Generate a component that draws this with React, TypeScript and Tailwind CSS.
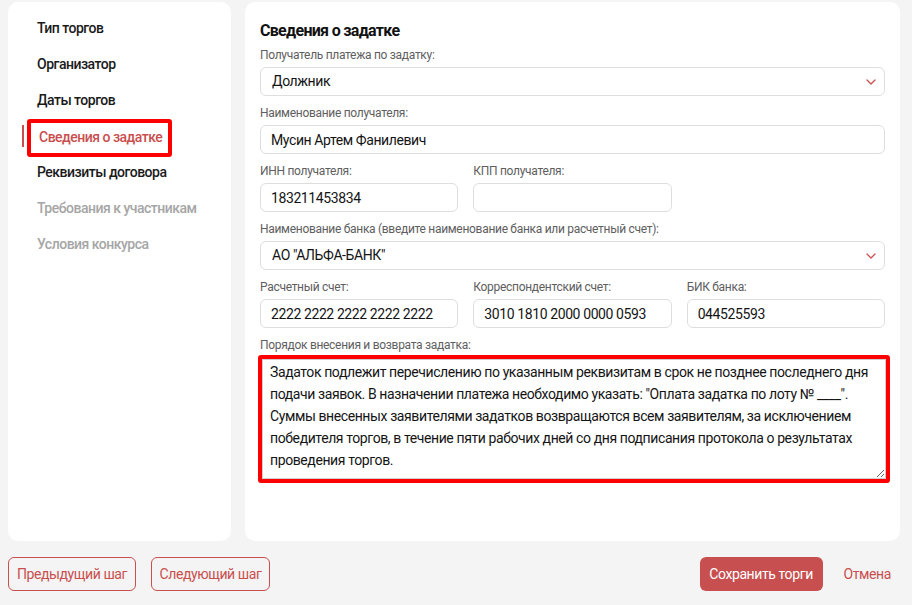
import React from 'react';

const red = '#c94f4f';

const steps = [
  { label: 'Тип торгов', state: 'done' },
  { label: 'Организатор', state: 'done' },
  { label: 'Даты торгов', state: 'done' },
  { label: 'Сведения о задатке', state: 'active' },
  { label: 'Реквизиты договора', state: 'done' },
  { label: 'Требования к участникам', state: 'disabled' },
  { label: 'Условия конкурса', state: 'disabled' },
];

const depositText =
  'Задаток подлежит перечислению по указанным реквизитам в срок не позднее последнего дня\n' +
  'подачи заявок. В назначении платежа необходимо указать: "Оплата задатка по лоту № ____".\n' +
  'Суммы внесенных заявителями задатков возвращаются всем заявителям, за исключением\n' +
  'победителя торгов, в течение пяти рабочих дней со дня подписания протокола о результатах\n' +
  'проведения торгов.';

const Chevron = () => (
  <svg width="10" height="6" viewBox="0 0 10 6" fill="none" className="shrink-0">
    <path d="M1 1l4 4 4-4" stroke={red} strokeWidth="1.3" strokeLinecap="round" strokeLinejoin="round" />
  </svg>
);

const Field: React.FC<{ label: string; className?: string; children: React.ReactNode }> = ({
  label,
  className,
  children,
}) => (
  <div className={className}>
    <div className="text-[12px] leading-[16px] tracking-[-0.3px] text-[#5e5e5e]">{label}</div>
    <div className="mt-[4px]">{children}</div>
  </div>
);

const TextInput: React.FC<{ value: string }> = ({ value }) => (
  <input
    type="text"
    defaultValue={value}
    className="block w-full h-[29px] rounded-[6px] border border-[#dedede] bg-white pl-[10px] text-[14px] tracking-[-0.4px] text-[#141414] outline-none"
  />
);

const SelectBox: React.FC<{ value: string }> = ({ value }) => (
  <div className="flex items-center justify-between h-[29px] rounded-[6px] border border-[#dedede] bg-white pl-[11px] pr-[8px] text-[14px] text-[#141414]">
    <span>{value}</span>
    <Chevron />
  </div>
);

export default function App() {
  return (
    <div
      className="w-[912px] h-[605px] bg-[#f4f4f4] pt-[2px] pl-[8px] pr-[12px] text-[#141414] tracking-[-0.4px]"
      style={{ fontFamily: 'Roboto, "Liberation Sans", sans-serif' }}
    >
      <div className="flex gap-[14px] h-[539px]">
        {/* steps sidebar */}
        <aside className="w-[223px] shrink-0 bg-white rounded-[10px] pt-[8px]">
          {steps.map((s) => (
            <div key={s.label} className="relative h-[36px] flex items-center pl-[29px]">
              {s.state === 'active' && (
                <>
                  <span className="absolute left-[14px] top-[7px] w-[2px] h-[22px] bg-[#c94f4f]" />
                  <span className="absolute left-[19px] top-[1px] w-[145px] h-[38px] border-4 border-[#ff0000] rounded-[3px]" />
                </>
              )}
              <span
                className={
                  'text-[14px] font-medium tracking-[-0.5px] ' +
                  (s.state === 'active'
                    ? 'text-[#c94f4f] pl-[2px] pt-[2px]'
                    : s.state === 'disabled'
                    ? 'text-[#a6a6a6]'
                    : 'text-[#1a1a1a]')
                }
              >
                {s.label}
              </span>
            </div>
          ))}
        </aside>

        {/* form */}
        <main className="flex-1 min-w-0 bg-white rounded-[10px] pt-[19px] px-[15px]">
          <h2 className="text-[16px] leading-[20px] font-bold text-[#111] tracking-[-0.7px]">Сведения о задатке</h2>
          <div className="mt-[6px] flex flex-col gap-[9px]">
            <Field label="Получатель платежа по задатку:">
              <SelectBox value="Должник" />
            </Field>
            <Field label="Наименование получателя:">
              <TextInput value="Мусин Артем Фанилевич" />
            </Field>
            <div className="grid grid-cols-3 gap-[15px]">
              <Field label="ИНН получателя:">
                <TextInput value="183211453834" />
              </Field>
              <Field label="КПП получателя:">
                <TextInput value="" />
              </Field>
            </div>
            <Field label="Наименование банка (введите наименование банка или расчетный счет):">
              <SelectBox value='АО "АЛЬФА-БАНК"' />
            </Field>
            <div className="grid grid-cols-3 gap-[15px]">
              <Field label="Расчетный счет:">
                <TextInput value="2222 2222 2222 2222 2222" />
              </Field>
              <Field label="Корреспондентский счет:">
                <TextInput value="3010 1810 2000 0000 0593" />
              </Field>
              <Field label="БИК банка:">
                <TextInput value="044525593" />
              </Field>
            </div>
            <div>
              <div className="text-[12px] leading-[16px] tracking-[-0.3px] text-[#5e5e5e]">
                Порядок внесения и возврата задатка:
              </div>
              <div className="mt-[2px] -ml-[2px] -mr-[5px] border-4 border-[#ff0000] rounded-[3px]">
                <textarea
                  defaultValue={depositText}
                  wrap="off"
                  className="block w-full h-[120px] border border-[#cfcfcf] bg-white pl-[7px] pt-[1px] text-[14px] leading-[22px] tracking-[-0.4px] text-[#141414] outline-none overflow-hidden"
                />
              </div>
            </div>
          </div>
        </main>
      </div>

      {/* footer actions */}
      <div className="mt-[16px] flex items-center justify-between">
        <div className="flex gap-[15px]">
          <button className="w-[128px] h-[34px] rounded-[6px] border border-[#c94f4f] text-[14px] text-[#c94f4f] bg-transparent">
            Предыдущий шаг
          </button>
          <button className="w-[119px] h-[34px] rounded-[6px] border border-[#c94f4f] text-[14px] text-[#c94f4f] bg-transparent">
            Следующий шаг
          </button>
        </div>
        <div className="flex items-center gap-[21px] pr-[9px]">
          <button className="w-[123px] h-[34px] rounded-[6px] bg-[#c84f4f] text-[14px] text-white">
            Сохранить торги
          </button>
          <button className="text-[14px] text-[#c94f4f] bg-transparent">Отмена</button>
        </div>
      </div>
    </div>
  );
}
